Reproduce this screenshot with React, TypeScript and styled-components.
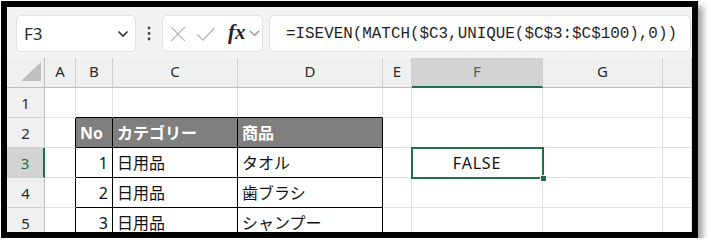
import React from "react";
import styled, { createGlobalStyle } from "styled-components";

const Global = createGlobalStyle`
  html, body { margin: 0; padding: 0; background: #ffffff; }
  * { box-sizing: border-box; }
`;

const GREEN = "#1e7145";
const GRID = "#e1e1e1";
const HDR_LINE = "#d0d0d0";
const UI = `"Noto Sans", "Open Sans", "Noto Sans CJK JP", sans-serif`;
const CELL = `"Noto Sans", "Noto Sans CJK JP", sans-serif`;

const Frame = styled.div`
  margin: 1px 0 0 1px;
  width: 697px;
  height: 237px;
  border: 6px solid #000;
  overflow: hidden;
  box-shadow: 5px 5px 6px rgba(0, 0, 0, 0.35);
  background: #fff;
  display: flex;
  flex-direction: column;
`;

const FormulaBar = styled.div`
  height: 51px;
  flex: none;
  background: #f3f3f3;
  display: flex;
  align-items: flex-start;
  padding: 8px 0 0 9px;
`;

const Box = styled.div<{ $w?: number }>`
  height: 37px;
  background: #fff;
  border: 1px solid #e2e2e2;
  border-radius: 5px;
  display: flex;
  align-items: center;
  ${(p) => (p.$w ? `width: ${p.$w}px; flex: none;` : "flex: 1;")}
`;

const NameText = styled.span`
  font-family: ${UI};
  font-size: 17px;
  color: #2b2b2b;
  padding-left: 7px;
  flex: 1;
`;

const Dots = styled.div`
  width: 26px;
  flex: none;
  height: 37px;
  display: flex;
  align-items: center;
  justify-content: center;
`;

const FormulaText = styled.span`
  font-family: "Liberation Mono", "DejaVu Sans Mono", monospace;
  font-size: 15.9px;
  color: #1f1f1f;
  padding-left: 16px;
  white-space: nowrap;
`;

const Fx = styled.span`
  font-family: "Liberation Serif", "DejaVu Serif", serif;
  font-style: italic;
  font-weight: bold;
  font-size: 21px;
  color: #222;
  margin-left: 12px;
  line-height: 1;
  padding-bottom: 2px;
`;

const Sheet = styled.table`
  border-collapse: separate;
  border-spacing: 0;
  table-layout: fixed;
  width: 685px;
`;

const Col = styled.col<{ $w: number }>`
  width: ${(p) => p.$w}px;
`;

const Row = styled.tr`
  height: 30px;
`;

const ColHead = styled.th<{ $sel?: boolean }>`
  height: 30px;
  padding: 0 0 3px 0;
  font-family: ${UI};
  font-weight: normal;
  font-size: 15px;
  color: ${(p) => (p.$sel ? "#3a6b4f" : "#2b2b2b")};
  background: ${(p) => (p.$sel ? "#d3d3d3" : "#f0f0f0")};
  border-right: 1px solid ${HDR_LINE};
  border-bottom: ${(p) => (p.$sel ? `2px solid ${GREEN}` : "1px solid #bdbdbd")};
  text-align: center;
  vertical-align: middle;
`;

const Corner = styled.th`
  height: 30px;
  padding: 0;
  background: #f0f0f0;
  border-right: 1px solid #bdbdbd;
  border-bottom: 1px solid #bdbdbd;
  position: relative;
`;

const RowHead = styled.th<{ $sel?: boolean }>`
  padding: 0;
  font-family: ${UI};
  font-weight: normal;
  font-size: 15px;
  color: ${(p) => (p.$sel ? "#1e6b48" : "#2b2b2b")};
  background: ${(p) => (p.$sel ? "#d3d3d3" : "#f0f0f0")};
  border-right: ${(p) => (p.$sel ? `2px solid ${GREEN}` : "1px solid #bdbdbd")};
  border-bottom: 1px solid ${HDR_LINE};
  text-align: center;
  vertical-align: middle;
`;

const Cell = styled.td<{
  $rb?: boolean;
  $bb?: boolean;
  $head?: boolean;
  $active?: boolean;
  $align?: "left" | "right" | "center";
}>`
  padding: 0 ${(p) => (p.$align === "right" ? "4px" : "0")} 0
    ${(p) => (p.$align === "left" ? "4px" : "0")};
  font-family: ${CELL};
  font-size: 16px;
  font-weight: ${(p) => (p.$head ? "bold" : "normal")};
  color: ${(p) => (p.$head ? "#ffffff" : "#111")};
  background: ${(p) => (p.$head ? "#7f7f7f" : "#ffffff")};
  text-align: ${(p) => p.$align ?? "left"};
  letter-spacing: ${(p) => (p.$active ? "0.8px" : "0")};
  vertical-align: middle;
  white-space: nowrap;
  overflow: visible;
  border-right: 1px solid ${(p) => (p.$rb ? "#000" : GRID)};
  border-bottom: 1px solid ${(p) => (p.$bb ? "#000" : GRID)};
  line-height: 1;
  ${(p) => (p.$active ? "position: relative; z-index: 2;" : "")}
`;

const Selection = styled.div`
  position: absolute;
  left: -1px;
  top: -1px;
  width: 133px;
  height: 32px;
  border: 2px solid ${GREEN};
  pointer-events: none;
`;

const Handle = styled.div`
  position: absolute;
  right: -5px;
  bottom: -5px;
  width: 7px;
  height: 7px;
  background: ${GREEN};
  border: 1px solid #fff;
`;

const Triangle = styled.svg`
  position: absolute;
  right: 3px;
  bottom: 6px;
`;

const cols = [38, 31, 37, 125, 145, 29, 131, 120, 29];
const letters = ["A", "B", "C", "D", "E", "F", "G", ""];

const data = [
  { no: "1", cat: "日用品", item: "タオル" },
  { no: "2", cat: "日用品", item: "歯ブラシ" },
  { no: "3", cat: "日用品", item: "シャンプー" },
];

export default function App() {
  return (
    <>
      <Global />
      <Frame>
        <FormulaBar>
          <Box $w={120}>
            <NameText>F3</NameText>
            <svg width="12" height="8" viewBox="0 0 12 8" style={{ marginRight: 6 }}>
              <path d="M1.5 1.5 L6 6 L10.5 1.5" fill="none" stroke="#333" strokeWidth="1.6" />
            </svg>
          </Box>
          <Dots>
            <svg width="4" height="15" viewBox="0 0 4 15">
              <circle cx="2" cy="2" r="1.4" fill="#444" />
              <circle cx="2" cy="7.5" r="1.4" fill="#444" />
              <circle cx="2" cy="13" r="1.4" fill="#444" />
            </svg>
          </Dots>
          <Box $w={101}>
            <svg width="18" height="18" viewBox="0 0 18 18" style={{ marginLeft: 6 }}>
              <path d="M2 2 L16 16 M16 2 L2 16" stroke="#b8b8b8" strokeWidth="1.3" fill="none" />
            </svg>
            <svg width="20" height="16" viewBox="0 0 20 16" style={{ marginLeft: 9 }}>
              <path d="M1.5 8.5 L7 14 L18.5 2" stroke="#b8b8b8" strokeWidth="1.3" fill="none" />
            </svg>
            <Fx>fx</Fx>
            <svg width="11" height="7" viewBox="0 0 11 7" style={{ marginLeft: 3 }}>
              <path d="M1 1 L5.5 5.5 L10 1" fill="none" stroke="#8a8a8a" strokeWidth="1.2" />
            </svg>
          </Box>
          <Box style={{ marginLeft: 6, marginRight: 1 }}>
            <FormulaText>=ISEVEN(MATCH($C3,UNIQUE($C$3:$C$100),0))</FormulaText>
          </Box>
        </FormulaBar>
        <Sheet>
          <colgroup>
            {cols.map((w, i) => (
              <Col key={i} $w={w} />
            ))}
          </colgroup>
          <thead>
            <Row>
              <Corner>
                <Triangle width="20" height="19" viewBox="0 0 20 19">
                  <polygon points="20,0 20,19 0,19" fill="#bfbfbf" />
                </Triangle>
              </Corner>
              {letters.map((l, i) => (
                <ColHead key={i} $sel={l === "F"}>
                  {l}
                </ColHead>
              ))}
            </Row>
          </thead>
          <tbody>
            <Row>
              <RowHead>1</RowHead>
              <Cell />
              <Cell $bb />
              <Cell $bb />
              <Cell $bb />
              <Cell />
              <Cell />
              <Cell />
              <Cell />
            </Row>
            <Row>
              <RowHead>2</RowHead>
              <Cell $rb />
              <Cell $head $rb $bb $align="left">
                No
              </Cell>
              <Cell $head $rb $bb $align="left">
                カテゴリー
              </Cell>
              <Cell $head $rb $bb $align="left">
                商品
              </Cell>
              <Cell />
              <Cell />
              <Cell />
              <Cell />
            </Row>
            {data.map((d, i) => (
              <Row key={d.no}>
                <RowHead $sel={i === 0}>{i + 3}</RowHead>
                <Cell $rb />
                <Cell $rb $bb $align="right">
                  {d.no}
                </Cell>
                <Cell $rb $bb $align="left">
                  {d.cat}
                </Cell>
                <Cell $rb $bb $align="left">
                  {d.item}
                </Cell>
                <Cell />
                {i === 0 ? (
                  <Cell $align="center" $active>
                    FALSE
                    <Selection>
                      <Handle />
                    </Selection>
                  </Cell>
                ) : (
                  <Cell />
                )}
                <Cell />
                <Cell />
              </Row>
            ))}
          </tbody>
        </Sheet>
      </Frame>
    </>
  );
}
